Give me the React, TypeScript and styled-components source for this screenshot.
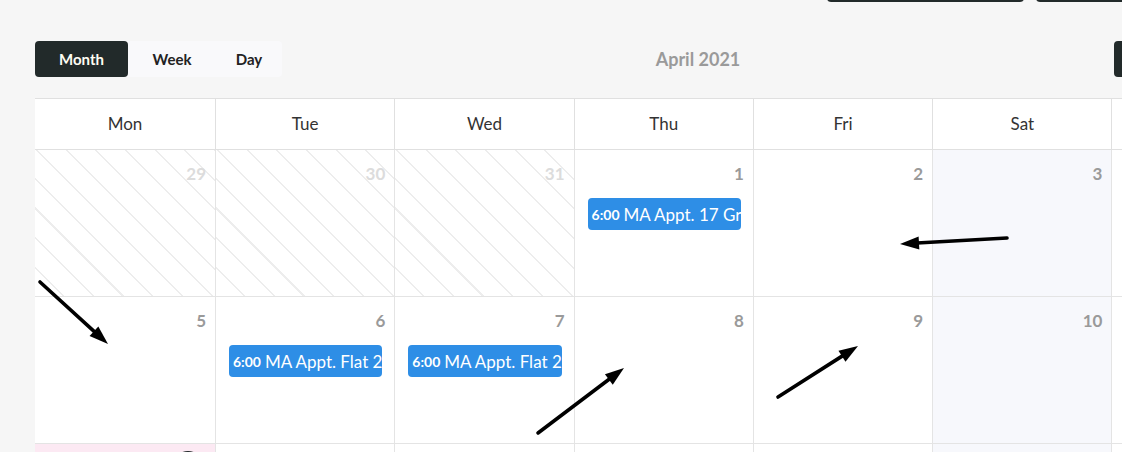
import React from "react";
import styled, { createGlobalStyle, css } from "styled-components";

type DayKind = "normal" | "out" | "weekend" | "today";

type CalEvent = { time: string; title: string };

type Day = { n: number; kind: DayKind; event?: CalEvent };

const weekdays = ["Mon", "Tue", "Wed", "Thu", "Fri", "Sat", "Sun"];

const weeks: Day[][] = [
  [
    { n: 29, kind: "out" },
    { n: 30, kind: "out" },
    { n: 31, kind: "out" },
    { n: 1, kind: "normal", event: { time: "6:00", title: "MA Appt. 17 Green Lane" } },
    { n: 2, kind: "normal" },
    { n: 3, kind: "weekend" },
    { n: 4, kind: "normal" },
  ],
  [
    { n: 5, kind: "normal" },
    { n: 6, kind: "normal", event: { time: "6:00", title: "MA Appt. Flat 2B" } },
    { n: 7, kind: "normal", event: { time: "6:00", title: "MA Appt. Flat 2B" } },
    { n: 8, kind: "normal" },
    { n: 9, kind: "normal" },
    { n: 10, kind: "weekend" },
    { n: 11, kind: "normal" },
  ],
  [
    { n: 12, kind: "today" },
    { n: 13, kind: "normal" },
    { n: 14, kind: "normal" },
    { n: 15, kind: "normal" },
    { n: 16, kind: "normal" },
    { n: 17, kind: "weekend" },
    { n: 18, kind: "normal" },
  ],
];

// pointer marks drawn on top of the month grid
const pointers = [
  { x1: 40, y1: 282, x2: 108, y2: 344 },
  { x1: 1007, y1: 238, x2: 900, y2: 244 },
  { x1: 538, y1: 433, x2: 624, y2: 368 },
  { x1: 778, y1: 397, x2: 858, y2: 346 },
];

function Arrow({ x1, y1, x2, y2 }: { x1: number; y1: number; x2: number; y2: number }) {
  const a = Math.atan2(y2 - y1, x2 - x1);
  const len = 19;
  const w = 6.5;
  const bx = x2 - len * Math.cos(a);
  const by = y2 - len * Math.sin(a);
  const pts = [
    `${x2},${y2}`,
    `${bx - w * Math.sin(a)},${by + w * Math.cos(a)}`,
    `${bx + w * Math.sin(a)},${by - w * Math.cos(a)}`,
  ].join(" ");
  return (
    <g>
      <line x1={x1} y1={y1} x2={bx + 2 * Math.cos(a)} y2={by + 2 * Math.sin(a)} stroke="#000" strokeWidth={3.6} strokeLinecap="round" />
      <polygon points={pts} fill="#000" />
    </g>
  );
}

function App() {
  return (
    <>
      <GlobalStyle />
      <Page>
        <TopActions>
          <TopButton />
          <TopButton />
        </TopActions>

        <Toolbar>
          <ViewSwitch>
            <ViewButton $active $width={93}>Month</ViewButton>
            <ViewButton $width={88}>Week</ViewButton>
            <ViewButton $width={66}>Day</ViewButton>
          </ViewSwitch>
          <Title>April 2021</Title>
          <NavButton />
        </Toolbar>

        <Calendar>
          <HeaderRow>
            {weekdays.map((d) => (
              <HeaderCell key={d}>{d}</HeaderCell>
            ))}
          </HeaderRow>
          {weeks.map((week, i) => (
            <WeekRow key={i}>
              {week.map((day) => (
                <DayCell key={day.n} $kind={day.kind}>
                  {day.kind === "today" ? (
                    <TodayNumber>{day.n}</TodayNumber>
                  ) : (
                    <DayNumber $muted={day.kind === "out"}>{day.n}</DayNumber>
                  )}
                  {day.event && (
                    <EventChip>
                      <EventTime>{day.event.time}</EventTime>
                      {day.event.title}
                    </EventChip>
                  )}
                </DayCell>
              ))}
            </WeekRow>
          ))}
        </Calendar>

        <Marks width="1122" height="452">
          {pointers.map((p, i) => (
            <Arrow key={i} {...p} />
          ))}
        </Marks>
      </Page>
    </>
  );
}

export default App;

const GlobalStyle = createGlobalStyle`
  html, body {
    margin: 0;
    padding: 0;
    background: #f6f6f6;
    overflow: hidden;
  }
  body {
    font-family: Lato, "Open Sans", sans-serif;
    color: #333;
  }
`;

const Page = styled.div`
  position: relative;
  box-sizing: border-box;
  width: 1340px;
  height: 452px;
  padding: 0 35px;
`;

const TopActions = styled.div`
  display: flex;
  align-items: flex-end;
  gap: 12px;
  height: 2px;
  padding-left: 792px;
`;

const TopButton = styled.div`
  flex: none;
  width: 197px;
  height: 36px;
  background: #222a2a;
  border-radius: 4px;
`;

const Toolbar = styled.div`
  display: flex;
  align-items: center;
  height: 36px;
  margin-top: 39px;
`;

const ViewSwitch = styled.div`
  display: flex;
  background: #f9f9fb;
  border-radius: 4px;
`;

const ViewButton = styled.div<{ $active?: boolean; $width: number }>`
  width: ${(p) => p.$width}px;
  height: 36px;
  display: flex;
  align-items: center;
  justify-content: center;
  font-size: 15px;
  font-weight: 700;
  color: #222;
  border-radius: 4px;
  ${(p) =>
    p.$active &&
    css`
      background: #222a2a;
      color: #fffdf2;
    `}
`;

const Title = styled.div`
  flex: 1;
  text-align: center;
  font-size: 18px;
  font-weight: 700;
  color: #9a9a9a;
`;

const NavButton = styled.div`
  width: 191px;
  height: 36px;
  background: #222a2a;
  border-radius: 4px;
`;

const columns = "180px repeat(6, 179.3px)";

const Calendar = styled.div`
  margin-top: 21px;
  width: 1256px;
  background: #fff;
  border-top: 1px solid #e0e0e0;
`;

const HeaderRow = styled.div`
  display: grid;
  grid-template-columns: ${columns};
  border-bottom: 1px solid #e0e0e0;
`;

const HeaderCell = styled.div`
  height: 50px;
  line-height: 50px;
  text-align: center;
  font-size: 17px;
  color: #333;
  border-left: 1px solid #e0e0e0;

  &:first-child {
    border-left: none;
  }
`;

const WeekRow = styled.div`
  display: grid;
  grid-template-columns: ${columns};
  height: 147px;
  box-sizing: border-box;
  border-bottom: 1px solid #e4e4e4;
`;

const cellBackground: Record<DayKind, string> = {
  normal: "#fff",
  weekend: "#f7f8fc",
  today: "#fce9f3",
  out: "repeating-linear-gradient(45deg, #fff 0, #fff 19.5px, #ededed 19.5px, #ededed 21px)",
};

const DayCell = styled.div<{ $kind: DayKind }>`
  display: flex;
  flex-direction: column;
  min-width: 0;
  overflow: hidden;
  background: ${(p) => cellBackground[p.$kind]};
  border-left: 1px solid #e4e4e4;

  &:first-child {
    border-left: none;
  }
`;

const DayNumber = styled.div<{ $muted: boolean }>`
  padding: 14px 9px 0;
  text-align: right;
  font-size: 17px;
  line-height: 20px;
  font-weight: 700;
  color: ${(p) => (p.$muted ? "#dcdcdc" : "#9a9a9a")};
`;

const TodayNumber = styled.div`
  align-self: flex-end;
  width: 30px;
  height: 30px;
  margin: 7px 12px 0 0;
  border-radius: 50%;
  background: #222a2a;
  color: #fff;
  font-size: 15px;
  font-weight: 700;
  display: flex;
  align-items: center;
  justify-content: center;
`;

const EventChip = styled.div`
  display: flex;
  align-items: center;
  height: 32px;
  margin: 14px 12px 0 13px;
  padding: 0 4px;
  background: #2e8ee6;
  border-radius: 4px;
  color: #fff;
  font-size: 17px;
  white-space: nowrap;
  overflow: hidden;
`;

const EventTime = styled.span`
  font-size: 14px;
  font-weight: 700;
  margin-right: 4px;
`;

const Marks = styled.svg`
  position: absolute;
  left: 0;
  top: 0;
  pointer-events: none;
`;
